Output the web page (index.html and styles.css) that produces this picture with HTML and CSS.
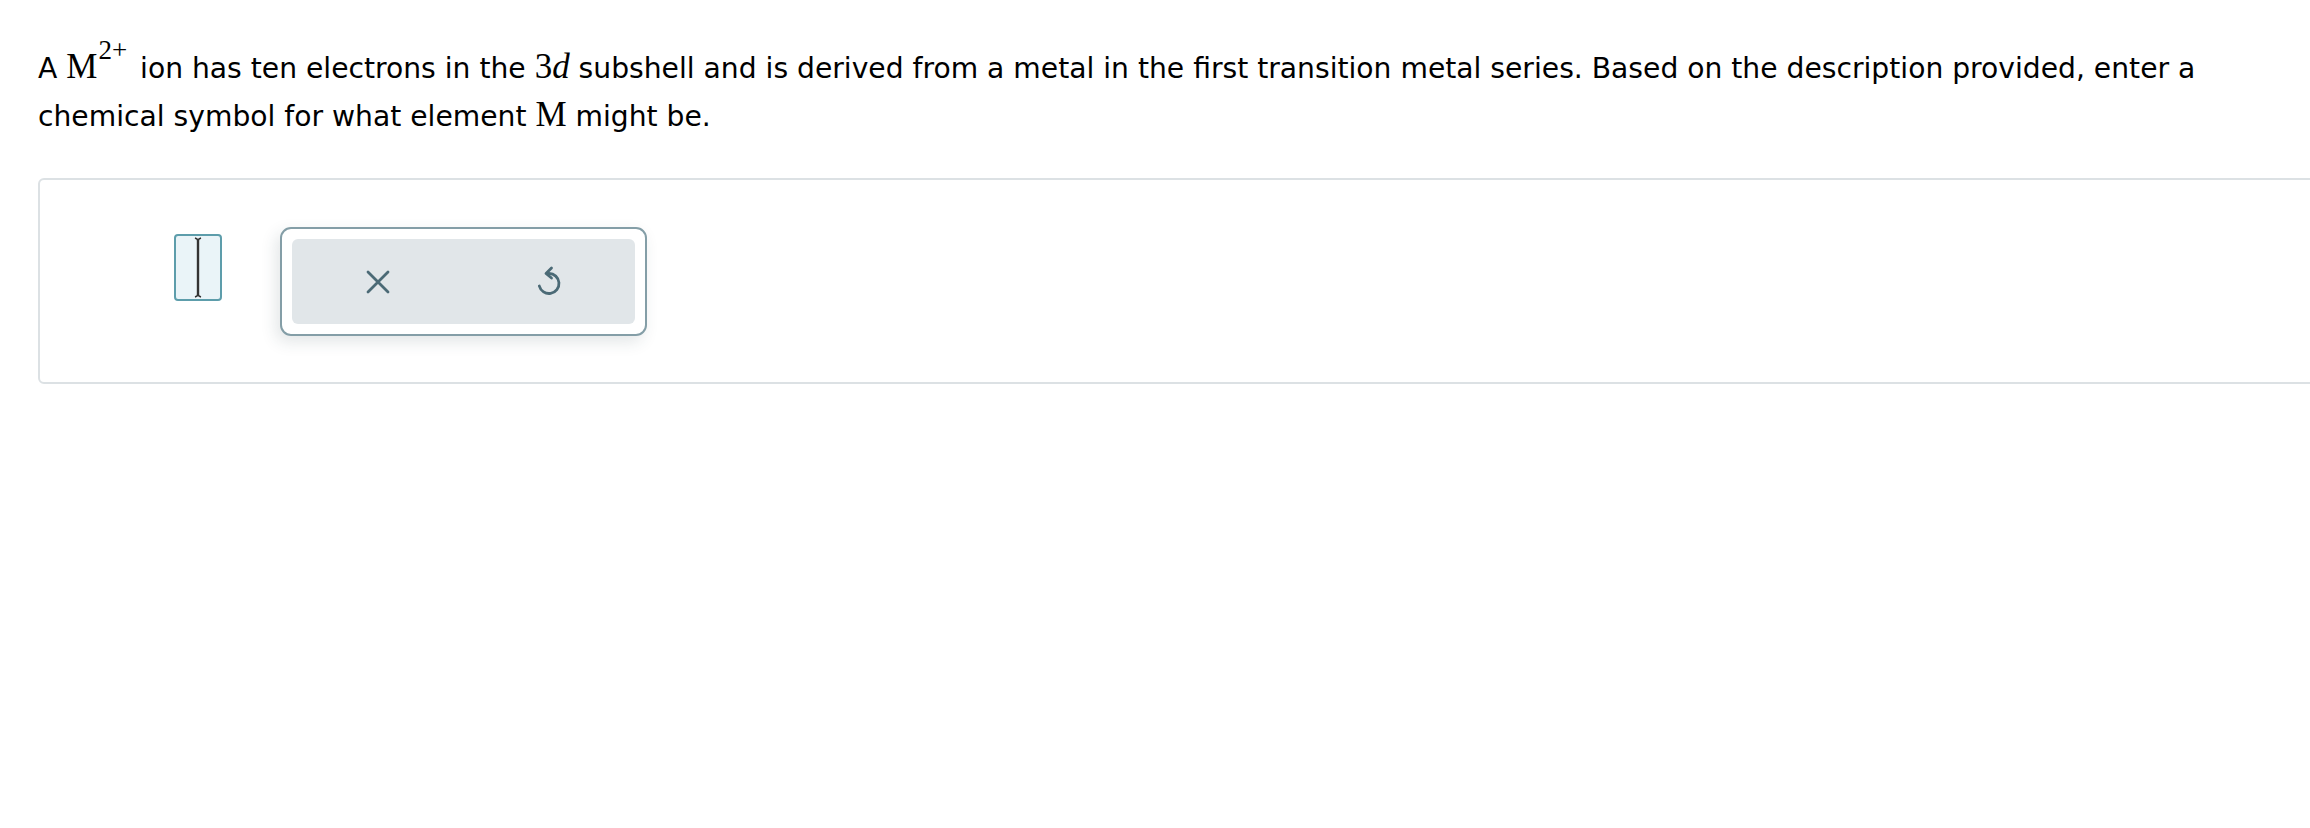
FILE: index.html
```html
<!DOCTYPE html>
<html>
<head>
<meta charset="utf-8">
<link rel="stylesheet" href="styles.css">
</head>
<body>
<div class="page">
  <p class="question">A <span class="math">M<sup class="sup">2+</sup></span> ion has ten electrons in the <span class="math">3<i>d</i></span> subshell and is derived from a metal in the first transition metal series. Based on the description provided, enter a chemical symbol for what element <span class="math">M</span> might be.</p>
  <div class="answer-box">
    <div class="input-field">
      <svg class="ibeam" width="12" height="63" viewBox="0 0 12 63">
        <path d="M3 2 Q6 3 6 5 Q6 3 9 2" fill="none" stroke="#333" stroke-width="1.5"/>
        <line x1="6" y1="4" x2="6" y2="59" stroke="#333" stroke-width="2.4"/>
        <path d="M3 61 Q6 60 6 58 Q6 60 9 61" fill="none" stroke="#333" stroke-width="1.5"/>
      </svg>
    </div>
    <div class="tool-panel">
      <div class="tool-inner">
        <button class="tool-btn" type="button" aria-label="Clear">
          <svg width="26" height="26" viewBox="0 0 26 26">
            <path d="M3 3 L23 23 M23 3 L3 23" stroke="#4b6a76" stroke-width="2.8" stroke-linecap="round" fill="none"/>
          </svg>
        </button>
        <button class="tool-btn" type="button" aria-label="Undo">
          <svg width="30" height="34" viewBox="0 0 30 34">
            <path d="M15 8.5 A10 10 0 1 1 5.3 21" stroke="#4b6a76" stroke-width="2.8" stroke-linecap="round" fill="none"/>
            <path d="M17.5 3 L12 8.5 L17.5 13" stroke="#4b6a76" stroke-width="2.8" stroke-linecap="round" stroke-linejoin="round" fill="none"/>
          </svg>
        </button>
      </div>
    </div>
  </div>
</div>
</body>
</html>
```

FILE: styles.css
```css
html, body {
  margin: 0;
  padding: 0;
  background: #ffffff;
}
body {
  overflow: hidden;
  width: 2310px;
  height: 828px;
}
.page {
  padding: 0 0 0 38px;
  font-family: "DejaVu Sans", Verdana, sans-serif;
  color: #000;
}
.question {
  margin: 0;
  padding-top: 45px;
  font-size: 28.2px;
  line-height: 48px;
  width: 2250px;
}
.math {
  font-family: "Liberation Serif", "DejaVu Serif", serif;
  font-size: 35px;
  line-height: 0;
}
.math i {
  font-style: italic;
}
.sup {
  font-size: 27px;
  line-height: 0;
  vertical-align: 0;
  position: relative;
  top: -19px;
  margin-left: 1px;
  margin-right: 4px;
}
.answer-box {
  margin-top: 37px;
  width: 2300px;
  box-sizing: border-box;
  border: 2px solid #dce1e4;
  border-radius: 6px;
  padding: 47px 0 46px 134px;
  display: flex;
  align-items: flex-start;
}
.input-field {
  margin-top: 7px;
  width: 48px;
  height: 67px;
  box-sizing: border-box;
  border: 2px solid #5d9dab;
  border-radius: 4px;
  background: #eaf4f8;
  display: flex;
  align-items: center;
  justify-content: center;
}
.ibeam {
  display: block;
}
.tool-panel {
  margin-left: 58px;
  width: 367px;
  height: 109px;
  box-sizing: border-box;
  border: 2px solid #849ea7;
  border-radius: 11px;
  background: #ffffff;
  padding: 10px;
  box-shadow: -4px 6px 16px rgba(40, 60, 70, 0.13);
}
.tool-inner {
  height: 100%;
  background: #e1e6e9;
  border-radius: 6px;
  display: flex;
}
.tool-btn {
  flex: 1;
  border: none;
  background: transparent;
  padding: 0;
  margin: 0;
  display: flex;
  align-items: center;
  justify-content: center;
  cursor: pointer;
}
.tool-btn svg {
  display: block;
}
```
